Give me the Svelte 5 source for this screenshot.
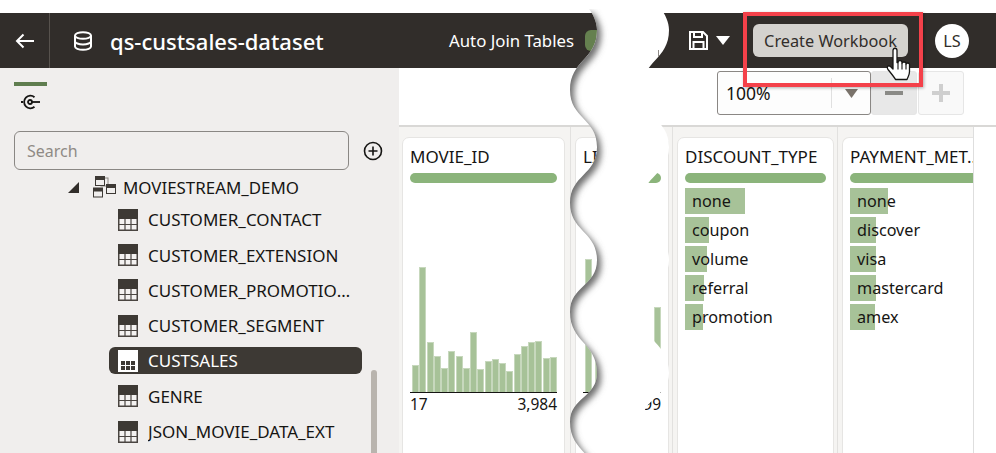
<script>
  const items = ['CUSTOMER_CONTACT', 'CUSTOMER_EXTENSION', 'CUSTOMER_PROMOTIONS_DATA', 'CUSTOMER_SEGMENT', 'CUSTSALES', 'GENRE', 'JSON_MOVIE_DATA_EXT'];
  const hist = [27, 125, 50, 36, 24, 41, 36, 24, 60, 23, 31, 33, 29, 21, 38, 46, 50, 51, 34, 35];
  const hist2 = [133, 60, 40, 70, 55, 30, 45, 85];
  const discount = [['none', 60], ['coupon', 24], ['volume', 22], ['referral', 19], ['promotion', 18]];
  const payment = [['none', 38], ['discover', 26], ['visa', 26], ['mastercard', 26], ['amex', 25]];

  const pts = [[30, 597], [90, 570], [147, 597], [203, 570], [260, 597], [312, 570], [373, 597], [422, 570], [482, 597]];
  const curve = (p, dx) => {
    let d = '';
    for (let i = 1; i < p.length; i++) {
      const [y0, x0] = p[i - 1];
      const [y1, x1] = p[i];
      const m = (y0 + y1) / 2;
      d += `C${x0 + dx} ${m} ${x1 + dx} ${m} ${x1 + dx} ${y1}`;
    }
    return d;
  };
  const band = `M589 9C593 14 597 22 597 30${curve(pts, 0)}L669 482${curve([...pts].reverse(), 72)}C669 22 665 14 661 9Z`;
  const leftRegion = `M0 9L589 9C593 14 597 22 597 30${curve(pts, 0)}L0 482Z`;
</script>

{#snippet tableIcon(selected)}
  <svg class="ticon" width="20" height="22" viewBox="0 0 20 22">
    {#if selected}
      <rect width="20" height="22" fill="#fff" />
      <path d="M3 11h4v4H3zM8 11h4v4H8zM13 11h4v4h-4zM3 16h4v4H3zM8 16h4v4H8zM13 16h4v4h-4z" fill="#3d3934" />
    {:else}
      <rect x=".75" y=".75" width="18.5" height="20.5" fill="#f4f2f1" stroke="#4a4541" stroke-width="1.5" />
      <rect width="20" height="10" fill="#3d3934" />
      <path d="M7 10v11M13 10v11M1 15.5h18" stroke="#4a4541" stroke-width="1.2" />
    {/if}
  </svg>
{/snippet}

{#snippet histogram(bars)}
  <div class="hist">
    {#each bars as h}
      <span class="bar" style="height:{h}px"></span>
    {/each}
  </div>
{/snippet}

{#snippet catList(rows)}
  <ul class="cats">
    {#each rows as [label, w]}
      <li class="cat"><span class="fill" style="width:{w}px"></span><span class="catlabel">{label}</span></li>
    {/each}
  </ul>
{/snippet}

<div class="app">
  <header class="head">
    <div class="backcell">
      <svg width="20" height="16" viewBox="0 0 20 16" fill="none" stroke="#fff" stroke-width="2"><path d="M19 8H2M8.5 1.5 2 8l6.500 6.500" /></svg>
    </div>
    <svg class="db" width="20" height="20" viewBox="0 0 20 20" fill="none" stroke="#fff" stroke-width="2">
      <ellipse cx="10" cy="4.500" rx="8" ry="3.300" />
      <path d="M2 4.500v11c0 1.800 3.600 3.300 8 3.300s8-1.500 8-3.300v-11M2 10.200c0 1.800 3.600 3.300 8 3.300s8-1.500 8-3.300" />
    </svg>
    <h1 class="title">qs-custsales-dataset</h1>
    <span class="autojoin">Auto Join Tables</span>
    <span class="toggle"></span>
    <svg class="save" width="19" height="19" viewBox="0 0 19 19" fill="none" stroke="#fff" stroke-width="2">
      <path d="M1 1h13l4 4v13H1z" /><path d="M5 1v5h8V1M4.500 18v-7h10v7" />
    </svg>
    <svg class="caret" width="14" height="9" viewBox="0 0 14 9"><path d="M0 0h14L7 9z" fill="#fff" /></svg>
    <button class="create">Create Workbook</button>
    <span class="avatar">LS</span>
  </header>

  <div class="body">
    <aside class="side">
      <div class="tab">
        <span class="tabbar"></span>
        <svg class="tabicon" width="19" height="16" viewBox="0 0 19 16" fill="none" stroke="#161513" stroke-width="1.800">
          <path d="M13.500 3.200A6.300 6.300 0 1 0 13.500 12.800" />
          <circle cx="9" cy="8" r="2" />
          <path d="M11 8h8" />
          <path d="M0 8h2" />
        </svg>
      </div>
      <div class="searchrow">
        <input class="search" placeholder="Search" />
        <svg width="20" height="20" viewBox="0 0 20 20" fill="none" stroke="#161513" stroke-width="1.600">
          <circle cx="10" cy="10" r="8.500" /><path d="M10 5.500v9M5.500 10h9" />
        </svg>
      </div>
      <div class="tree">
        <div class="schema">
          <span class="tri"></span>
          <svg width="24" height="22" viewBox="0 0 24 22" fill="none">
            <rect x="8" y="2" width="7" height="8" stroke="#8a8580" />
            <path d="M8 14h-3v-2" stroke="#8a8580" />
            <rect x="2.500" y=".5" width="9" height="9" stroke="#3d3934" fill="#f0eeed" />
            <rect x="2.500" y=".5" width="9" height="3.500" fill="#3d3934" />
            <rect x="13.500" y="8.500" width="9" height="9" stroke="#3d3934" fill="#f0eeed" />
            <rect x="13.500" y="8.500" width="9" height="3.500" fill="#3d3934" />
            <rect x=".5" y="12" width="9" height="9" stroke="#3d3934" fill="#f0eeed" />
            <rect x=".5" y="12" width="9" height="3.500" fill="#3d3934" />
          </svg>
          <span class="schemaname">MOVIESTREAM_DEMO</span>
        </div>
        {#each items as item}
          <div class="row" class:sel={item === 'CUSTSALES'}>
            {@render tableIcon(item === 'CUSTSALES')}
            <span class="rowlabel">{item}</span>
          </div>
        {/each}
      </div>
      <span class="scroll"></span>
    </aside>

    <main class="main">
      <div class="toolbar">
        <div class="zoomsel">
          <span class="zoomval">100%</span>
          <span class="zoomcaret"><svg width="13" height="9" viewBox="0 0 13 9"><path d="M0 0h13L6.500 9z" fill="#7a736b" /></svg></span>
        </div>
        <button class="zbtn minus" aria-label="Zoom out"><svg width="18" height="18" viewBox="0 0 18 18"><path d="M0 7h18v4H0z" fill="#8a8a86" /></svg></button>
        <button class="zbtn plus" aria-label="Zoom in"><svg width="18" height="18" viewBox="0 0 18 18"><path d="M7 0h4v7h7v4h-7v7H7v-7H0V7h7z" fill="#cfcfcf" /></svg></button>
      </div>
      <div class="cols">
        <section class="col c1">
          <div class="card">
            <h2 class="ctitle">MOVIE_ID</h2>
            <div class="pill"></div>
            {@render histogram(hist)}
            <div class="range"><span>17</span><span>3,984</span></div>
          </div>
        </section>
        <section class="col c2">
          <div class="card">
            <h2 class="ctitle">LINE_ITEM</h2>
            <div class="pill"></div>
            {@render histogram(hist2)}
            <div class="range"><span>1</span><span>99</span></div>
          </div>
        </section>
        <section class="col c3">
          <div class="card">
            <h2 class="ctitle">DISCOUNT_TYPE</h2>
            <div class="pill"></div>
            {@render catList(discount)}
          </div>
        </section>
        <section class="col c4">
          <div class="card open">
            <h2 class="ctitle">PAYMENT_MET...</h2>
            <div class="pill"></div>
            {@render catList(payment)}
          </div>
        </section>
      </div>
    </main>
  </div>

  <svg class="rip" width="996" height="453" viewBox="0 0 996 453">
    <defs>
      <clipPath id="bandclip"><path d={band} /></clipPath>
      <filter id="soft" x="-5%" y="-5%" width="110%" height="110%"><feGaussianBlur stdDeviation="3" /></filter>
    </defs>
    <path d={band} fill="#fff" />
    <g clip-path="url(#bandclip)">
      <path d={leftRegion} transform="translate(4 4)" fill="#707070" filter="url(#soft)" />
    </g>
    <path d="M658.500 50v7" stroke="#8f8b87" />
  </svg>

  <div class="callout"></div>
  <svg class="hand" width="30" height="36" viewBox="0 0 30 36">
    <path d="M9 3.500c0-3 4-3 4 0V15.500l1 0c0-2.500 4-2.500 4 0v1c0-2 4-2 4 0v1c0-2 3.500-2 3.500 0v7c0 4-1.500 5-2.500 8H11.500c-1-2-3-4.500-7.500-10-1.500-2-.5-4 1.500-3.500 1 .3 2.500 2 3.500 3z" fill="#fff" stroke="#161513" stroke-width="1.300" stroke-linejoin="round" />
    <path d="M14 15.500v7M18 16.500v6M22 17.500v5" stroke="#161513" stroke-width="1.100" fill="none" />
  </svg>
</div>

<style>
  :global(body) { margin: 0; background: #fff; }
  .app {
    position: relative;
    width: 996px;
    height: 453px;
    padding-top: 13px;
    box-sizing: border-box;
    overflow: hidden;
    display: flex;
    flex-direction: column;
    font-family: "Noto Sans", "Open Sans", sans-serif;
    font-size: 16.300px;
    color: #161513;
    background: #fff;
  }
  .head {
    height: 55px;
    flex: none;
    background: #312d2a;
    color: #fff;
    display: flex;
    align-items: center;
  }
  .backcell {
    width: 50px;
    height: 55px;
    box-sizing: border-box;
    border-right: 1px solid #57524d;
    display: flex;
    align-items: center;
    padding-left: 15px;
  }
  .db { margin-left: 23px; }
  .title { margin: 0 0 0 17px; font-size: 22px; font-weight: 500; width: 339px; white-space: nowrap; }
  .autojoin { font-size: 16.800px; width: 136px; white-space: nowrap; }
  .toggle { width: 60px; height: 21px; border-radius: 6px; background: #65804f; margin-right: 44px; }
  .save { margin-right: 8px; }
  .caret { margin-right: 23px; }
  .create {
    width: 155px;
    height: 33px;
    padding: 0;
    border: 0;
    border-radius: 6px;
    background: #d4d2ce;
    color: #312d2a;
    font: inherit;
  }
  .avatar {
    margin-left: 27px;
    width: 34px;
    height: 34px;
    border-radius: 50%;
    background: #fff;
    color: #312d2a;
    display: flex;
    align-items: center;
    justify-content: center;
  }
  .body { flex: 1; min-height: 0; display: flex; }
  .side {
    position: relative;
    width: 399px;
    flex: none;
    background: #f0eeed;
    box-sizing: border-box;
    padding: 14px 0 0 14px;
  }
  .tab { width: 33px; display: flex; flex-direction: column; align-items: center; }
  .tabbar { width: 33px; height: 4px; background: #5f7d4f; }
  .tabicon { margin-top: 8px; }
  .searchrow { display: flex; align-items: center; gap: 14px; margin-top: 21px; }
  .search {
    width: 335px;
    height: 39px;
    box-sizing: border-box;
    border: 1px solid #8a8784;
    border-radius: 6px;
    background: #f0eeed;
    padding: 0 12px;
    font-family: inherit;
    font-size: 16px;
    color: #161513;
  }
  .search::placeholder { color: #8f8a85; opacity: 1; }
  .tree { margin-top: 6px; }
  .schema { display: flex; align-items: center; height: 22px; margin-left: 54px; }
  .tri { width: 0; height: 0; border-left: 11px solid transparent; border-bottom: 11px solid #312d2a; margin-right: 14px; }
  .schemaname { margin-left: 6px; font-size: 16.900px; }
  .row {
    display: flex;
    align-items: center;
    width: 253px;
    height: 27px;
    margin: 8.300px 0 0 95px;
    box-sizing: border-box;
    padding-left: 9px;
    border-radius: 6px;
    font-size: 17px;
  }
  .row:first-of-type { margin-top: 8px; }
  .sel { background: #3d3934; color: #fff; }
  .ticon { flex: none; margin-right: 10px; }
  .rowlabel { width: 204px; flex: none; overflow: hidden; text-overflow: ellipsis; white-space: nowrap; }
  .scroll { position: absolute; left: 371px; top: 302px; bottom: 0; width: 6px; border-radius: 3px 3px 0 0; background: #b9b4ae; }

  .main { flex: 1; min-width: 0; display: flex; flex-direction: column; }
  .toolbar {
    height: 54px;
    flex: none;
    border-bottom: 2px solid #d9d8d6;
    display: flex;
    align-items: flex-start;
    padding: 3px 0 0 318px;
  }
  .zoomsel {
    width: 154px;
    height: 44px;
    box-sizing: border-box;
    border: 1px solid #8a8784;
    border-radius: 3px;
    background: #fdfdfd;
    display: flex;
    align-items: center;
    justify-content: space-between;
    padding-left: 8px;
    font-size: 17.500px;
  }
  .zoomcaret { width: 38px; height: 30px; border-left: 1px solid #e0e0e0; display: flex; align-items: center; justify-content: center; }
  .zbtn { width: 46px; height: 44px; padding: 0; box-sizing: border-box; border: 1px solid #e6e6e6; border-radius: 3px; display: flex; align-items: center; justify-content: center; }
  .minus { background: #e8e8e8; }
  .plus { background: #f9f9f9; margin-left: 1px; }

  .cols { flex: 1; min-height: 0; display: flex; width: 576px; margin-left: -1px; border-right: 1px solid #dedede; box-sizing: border-box; background: #f5f4f2; }
  .col { box-sizing: border-box; padding: 10px 3px 0 4px; border-right: 1px solid #e2e1df; flex: none; }
  .c1 { width: 173px; padding-right: 5px; }
  .c2 { width: 102px; }
  .c3 { width: 165px; }
  .c4 { width: 135px; border-right: 0; padding-right: 0; }
  .card {
    height: 340px;
    background: #fff;
    border: 1px solid #e6e5e3;
    border-radius: 7px;
    padding: 0 7px;
    box-sizing: border-box;
  }
  .open { border-right: 0; padding-right: 0; border-radius: 7px 0 0 0; }
  .ctitle { margin: 8px 0 0; font-size: 17px; font-weight: 400; height: 22px; line-height: 22px; white-space: nowrap; overflow: hidden; }
  .pill { height: 10px; margin-top: 5px; border-radius: 5px; background: #8bb47b; }
  .open .pill { border-radius: 5px 0 0 5px; }
  .hist {
    height: 209px;
    border-bottom: 1px solid #161513;
    display: flex;
    align-items: flex-end;
    justify-content: space-between;
    padding-left: 2px;
  }
  .bar { flex: 0 0 7.200px; box-sizing: border-box; background: #a7c298; border: 1px solid #c7d8bd; border-bottom: 0; }
  .range { display: flex; justify-content: space-between; font-size: 15.500px; height: 20px; line-height: 20px; margin-top: 1px; }
  .cats { list-style: none; margin: 5px 0 0; padding: 0; display: flex; flex-direction: column; gap: 3px; font-size: 16.200px; }
  .cat { position: relative; height: 26px; line-height: 26px; padding-left: 7px; }
  .fill { position: absolute; left: 0; top: 0; bottom: 0; background: #a7c298; }
  .catlabel { position: relative; }

  .rip { position: absolute; left: 0; top: 0; pointer-events: none; }
  .callout {
    position: absolute;
    left: 743px;
    top: 12px;
    width: 180px;
    height: 75px;
    box-sizing: border-box;
    border: 4px solid #f4414a;
    box-shadow: 1px 1px 3px rgba(0, 0, 0, .3);
  }
  .hand { position: absolute; left: 884px; top: 47px; }
</style>
